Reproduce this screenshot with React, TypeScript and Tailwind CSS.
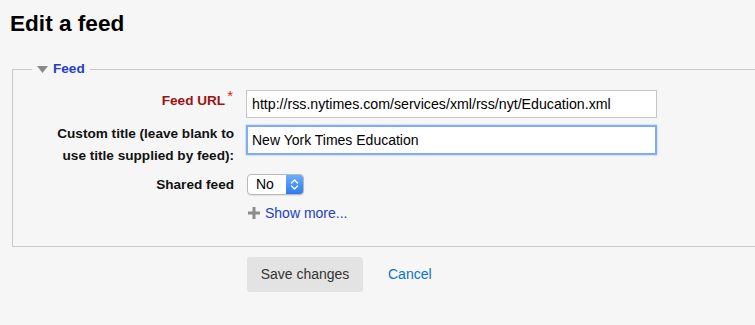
import React from 'react';

const SelectBox = () => (
  <div className="flex h-[21px] w-[57px] items-stretch overflow-hidden rounded-[4px] border border-[#b9b9b9] bg-white shadow-[0_1px_1px_rgba(0,0,0,0.08)]">
    <span className="flex-1 pl-[8px] text-[14px] leading-[19px] text-black">No</span>
    <span className="flex w-[17px] items-center justify-center bg-gradient-to-b from-[#6aaefc] to-[#2b7bf1]">
      <svg width="9" height="13" viewBox="0 0 9 13" fill="none" stroke="white" strokeWidth="1.4" strokeLinecap="round" strokeLinejoin="round">
        <path d="M1.5 5 L4.5 2 L7.5 5" />
        <path d="M1.5 8 L4.5 11 L7.5 8" />
      </svg>
    </span>
  </div>
);

export default function App() {
  return (
    <div className="h-[325px] w-full overflow-hidden bg-[#f6f6f6] font-['Liberation_Sans',Arial,sans-serif] text-[#222]">
      <h2 className="pl-[10px] pt-[11px] text-[22.6px] font-bold leading-[26px] text-black">Edit a feed</h2>

      <fieldset className="ml-[12px] mt-[24px] w-[760px] border border-[#c9c9c9] px-0 pb-[24px] pt-[13px]">
        <legend className="ml-[19px] flex items-center gap-[5px] px-[5px] text-[13.6px] font-bold leading-[16px] text-[#2340c4]">
          <svg width="11" height="7" viewBox="0 0 11 7">
            <path d="M0 0 L11 0 L5.5 7 Z" fill="#8a8a8a" />
          </svg>
          Feed
        </legend>

        <div className="flex items-center">
          <label className="relative -top-[3px] w-[221px] pr-[1px] text-right text-[13.6px] font-bold leading-[20px] text-[#9b1313]">
            Feed URL<span className="relative top-[-4px] ml-[2px] text-[15px] font-normal leading-[10px] text-[#e0201c]">*</span>
          </label>
          <input
            readOnly
            value="http://rss.nytimes.com/services/xml/rss/nyt/Education.xml"
            className="ml-[12px] h-[28px] w-[411px] border border-[#c6c6c6] bg-white px-[5px] text-[14.2px] text-black outline-none"
          />
        </div>

        <div className="mt-[7px] flex items-start">
          <label className="relative -top-[2px] w-[221px] text-right text-[13.6px] font-bold leading-[22px] text-[#111]">
            Custom title (leave blank to
            <br />
            use title supplied by feed):
          </label>
          <input
            readOnly
            value="New York Times Education"
            className="ml-[12px] h-[30px] w-[411px] border-2 border-[#80adf2] bg-white px-[4px] text-[14px] text-black shadow-[0_0_2px_#9cc1f7] outline-none"
          />
        </div>

        <div className="mt-[5px] flex items-center">
          <label className="w-[221px] text-right text-[13.6px] font-bold leading-[20px] text-[#111]">Shared feed</label>
          <div className="ml-[13px]">
            <SelectBox />
          </div>
        </div>

        <div className="ml-[235px] mt-[9px] flex items-center gap-[5px]">
          <svg width="12" height="12" viewBox="0 0 12 12">
            <rect x="4.5" y="0" width="3" height="12" fill="#8c8c8c" />
            <rect x="0" y="4.5" width="12" height="3" fill="#8c8c8c" />
          </svg>
          <span className="text-[14px] leading-[18px] text-[#2340c4]">Show more...</span>
        </div>
      </fieldset>

      <div className="mt-[10px] flex items-center pl-[247px]">
        <button className="h-[35px] w-[116px] rounded-[3px] bg-[#e3e3e3] text-[14px] text-[#333]">Save changes</button>
        <a className="ml-[25px] text-[14px] text-[#0a75c2]">Cancel</a>
      </div>
    </div>
  );
}
